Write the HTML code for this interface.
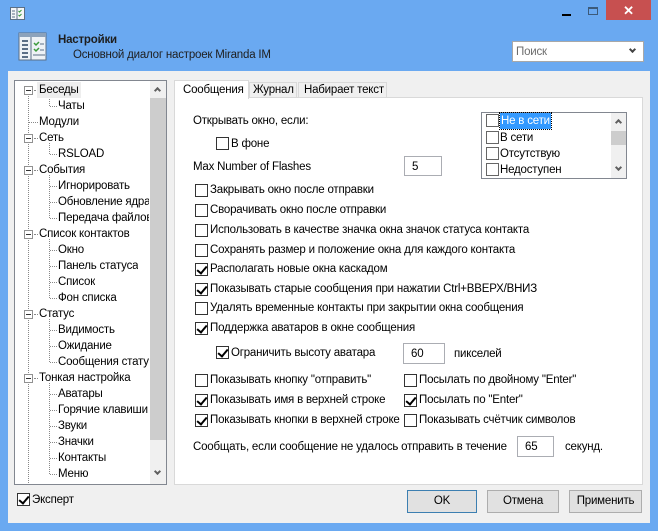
<!DOCTYPE html>
<html><head><meta charset="utf-8"><style>
*{margin:0;padding:0;box-sizing:border-box}
body{width:658px;height:531px;overflow:hidden;background:#6aa9f1;font-family:"Liberation Sans",sans-serif;font-size:11.5px;letter-spacing:-0.2px;color:#000;position:relative;line-height:16px}
.a{position:absolute;white-space:nowrap}
.cb{position:absolute;width:13px;height:13px;border:1px solid #333;background:#fff}
.cb.c::after{content:"";position:absolute;left:3px;top:0px;width:4px;height:8px;border:solid #000;border-width:0 2px 2px 0;transform:rotate(40deg)}
.ed{position:absolute;background:#fff;border:1px solid #abadb3;padding:3px 7px;line-height:14px}
.btn{position:absolute;height:23px;border:1px solid #adadad;background:#e1e1e1;text-align:center;line-height:21px}
.tg{position:absolute;width:9px;height:9px;border:1px solid #919191;background:#fff}
.tg::after{content:"";position:absolute;left:1px;top:3px;width:5px;height:1px;background:#333}
.dv{position:absolute;border-left:1px dotted #888}
.dh{position:absolute;border-top:1px dotted #888;height:0}
.chev{position:absolute;width:5px;height:5px;border:solid #606060;border-width:2px 2px 0 0}
</style></head><body>
<svg class="a" style="left:10px;top:7px" width="16" height="14"><rect x="0.5" y="0.5" width="14" height="12" fill="#f4f6f8" stroke="#5b6f86"/><line x1="7" y1="1" x2="7" y2="12" stroke="#5b6f86"/><path d="M2 4h3M2 7h3M2 10h3" stroke="#5b6f86"/><path d="M8.5 4l1 1 2-2M8.5 8l1 1 2-2" stroke="#3a9a3a" fill="none"/></svg>
<div class="a" style="left:562px;top:14px;width:9px;height:2px;background:#000"></div>
<div class="a" style="left:588px;top:7px;width:10px;height:8px;border:1px solid #3c5a7a;border-top-width:2px"></div>
<div class="a" style="left:606px;top:0;width:45px;height:20px;background:#c75050;color:#fff;text-align:center;font-size:13px;line-height:21px;font-weight:bold">✕</div>
<svg class="a" style="left:18px;top:32px" width="30" height="30"><rect x="1" y="1" width="27" height="27" fill="#eef2f6" stroke="#5b6f86"/><rect x="1" y="1" width="27" height="4" fill="#8ca2bb"/><line x1="13" y1="5" x2="13" y2="28" stroke="#5b6f86"/><path d="M4 9h6M4 13h6M4 17h6M4 21h6M4 25h6" stroke="#5b6f86" stroke-width="2"/><path d="M16 11l2 2 3-3M16 17l2 2 3-3" stroke="#3a9a3a" fill="none" stroke-width="1.5"/><path d="M22 12h4M22 18h4M15 23h12" stroke="#5b6f86"/></svg>
<div class="a" style="left:58px;top:32px;font-weight:bold;color:#1e1e1e">Настройки</div>
<div class="a" style="left:73px;top:47px;color:#1e1e1e">Основной диалог настроек Miranda IM</div>
<div class="a" style="left:512px;top:41px;width:132px;height:21px;background:#fff;border:1px solid #a8a8a8;color:#6d6d6d;padding:2px 3px">Поиск</div>
<div class="chev" style="left:630px;top:47px;transform:rotate(135deg);border-color:#444"></div>
<div class="a" style="left:8px;top:71px;width:642px;height:452px;background:#f0f0f0"></div>
<div class="a" style="left:14px;top:80px;width:153px;height:405px;background:#fff;border:1px solid #828790;overflow:hidden">
 <div class="a" style="left:135px;top:0;width:16px;height:403px;background:#f0f0f0"></div>
 <div class="a" style="left:135px;top:17px;width:16px;height:342px;background:#cdcdcd"></div>
 <div class="chev" style="left:140px;top:7px;transform:rotate(-45deg)"></div>
 <div class="chev" style="left:140px;top:388px;transform:rotate(135deg)"></div>
</div>
<div id="tree"></div>
<div class="cb c" style="left:17px;top:493px"></div>
<div class="a" style="left:32px;top:492px">Эксперт</div>
<div class="a" style="left:174px;top:97px;width:469px;height:388px;background:#fff;border:1px solid #d9d9d9"></div>
<div class="a" style="left:174px;top:80px;width:75px;height:19px;background:#fff;border:1px solid #d9d9d9;border-bottom:none;padding:1px 0 0 8px">Сообщения</div>
<div class="a" style="left:249px;top:82px;width:48px;height:16px;background:#f0f0f0;border:1px solid #d9d9d9;padding:0 0 0 3px;line-height:15px">Журнал</div>
<div class="a" style="left:298px;top:82px;width:89px;height:16px;background:#f0f0f0;border:1px solid #d9d9d9;padding:0 0 0 5px;line-height:15px">Набирает текст</div>
<div class="a" style="left:193px;top:113px">Открывать окно, если:</div>
<div class="cb" style="left:216px;top:137px"></div><div class="a" style="left:231px;top:136px">В фоне</div>
<div class="a" style="left:193px;top:159px">Max Number of Flashes</div>
<div class="ed" style="left:404px;top:156px;width:38px;height:20px">5</div>
<div class="a" style="left:481px;top:112px;width:146px;height:67px;background:#fff;border:1px solid #828790">
 <div class="a" style="left:129px;top:0;width:15px;height:65px;background:#f0f0f0"></div>
 <div class="a" style="left:129px;top:18px;width:15px;height:14px;background:#cdcdcd"></div>
 <div class="chev" style="left:134px;top:7px;transform:rotate(-45deg)"></div>
 <div class="chev" style="left:134px;top:52px;transform:rotate(135deg)"></div>
</div>
<div class="cb" style="left:486px;top:114px;border-color:#666"></div><div class="a" style="left:500px;top:113px;background:#3399ff;color:#fff;padding:0 1px;outline:1px dotted #000">Не в сети</div>
<div class="cb" style="left:486px;top:131px;border-color:#666"></div><div class="a" style="left:500px;top:130px">В сети</div>
<div class="cb" style="left:486px;top:147px;border-color:#666"></div><div class="a" style="left:500px;top:146px">Отсутствую</div>
<div class="cb" style="left:486px;top:163px;border-color:#666"></div><div class="a" style="left:500px;top:162px">Недоступен</div>
<div id="opts"></div>
<div class="cb c" style="left:216px;top:346px"></div><div class="a" style="left:231px;top:345px">Ограничить высоту аватара</div>
<div class="ed" style="left:403px;top:343px;width:42px;height:21px">60</div>
<div class="a" style="left:454px;top:346px">пикселей</div>
<div class="a" style="left:193px;top:439px">Сообщать, если сообщение не удалось отправить в течение</div>
<div class="ed" style="left:517px;top:436px;width:37px;height:21px">65</div>
<div class="a" style="left:565px;top:439px">секунд.</div>
<div class="btn" style="left:407px;top:490px;width:70px;border-color:#3c7fb1">OK</div>
<div class="btn" style="left:487px;top:490px;width:72px">Отмена</div>
<div class="btn" style="left:569px;top:490px;width:73px">Применить</div>
<script>
var t=[[0,"Беседы"],[1,"Чаты"],[0,"Модули"],[0,"Сеть"],[1,"RSLOAD"],[0,"События"],[1,"Игнорировать"],[1,"Обновление ядра"],[1,"Передача файлов"],[0,"Список контактов"],[1,"Окно"],[1,"Панель статуса"],[1,"Список"],[1,"Фон списка"],[0,"Статус"],[1,"Видимость"],[1,"Ожидание"],[1,"Сообщения стату"],[0,"Тонкая настройка"],[1,"Аватары"],[1,"Горячие клавиши"],[1,"Звуки"],[1,"Значки"],[1,"Контакты"],[1,"Меню"]];
var h='<div class="dv" style="left:28px;top:90px;height:393px"></div>';
t.forEach(function(r,i){var y=90+i*16,par=r[0]==0&&t[i+1]&&t[i+1][0]==1;
if(r[0]==0){h+=par?'<div class="tg" style="left:24px;top:'+(y-4)+'px"></div><div class="dh" style="left:34px;top:'+y+'px;width:4px"></div>':'<div class="dh" style="left:29px;top:'+y+'px;width:9px"></div>';
if(par){var j=i+1;while(t[j+1]&&t[j+1][0]==1)j++;h+='<div class="dv" style="left:49px;top:'+(y+5)+'px;height:'+((j-i)*16-5)+'px"></div>';}
h+='<div class="a" style="left:39px;top:'+(y-8)+'px;'+(i==0?'background:#eee;padding:0 2px;margin-left:-2px':'')+'">'+r[1]+'</div>';}
else{h+='<div class="dh" style="left:50px;top:'+y+'px;width:7px"></div><div class="a" style="left:58px;top:'+(y-8)+'px;max-width:91px;overflow:hidden">'+r[1]+'</div>';}});
document.getElementById('tree').innerHTML=h;
var o=[[190,0,"Закрывать окно после отправки"],[210,0,"Сворачивать окно после отправки"],[230,0,"Использовать в качестве значка окна значок статуса контакта"],[250,0,"Сохранять размер и положение окна для каждого контакта"],[269,1,"Располагать новые окна каскадом"],[289,1,"Показывать старые сообщения при нажатии Ctrl+ВВЕРХ/ВНИЗ"],[308,0,"Удалять временные контакты при закрытии окна сообщения"],[328,1,"Поддержка аватаров в окне сообщения"]];
var s='';o.forEach(function(r){s+='<div class="cb'+(r[1]?' c':'')+'" style="left:195px;top:'+(r[0]-6)+'px"></div><div class="a" style="left:210px;top:'+(r[0]-8)+'px">'+r[2]+'</div>';});
var b=[[380,0,'Показывать кнопку "отправить"',0,'Посылать по двойному "Enter"'],[400,1,'Показывать имя в верхней строке',1,'Посылать по "Enter"'],[420,1,'Показывать кнопки в верхней строке',0,'Показывать счётчик символов']];
b.forEach(function(r){s+='<div class="cb'+(r[1]?' c':'')+'" style="left:195px;top:'+(r[0]-6)+'px"></div><div class="a" style="left:210px;top:'+(r[0]-8)+'px;width:193px;overflow:hidden">'+r[2]+'</div><div class="cb'+(r[3]?' c':'')+'" style="left:404px;top:'+(r[0]-6)+'px"></div><div class="a" style="left:419px;top:'+(r[0]-8)+'px">'+r[4]+'</div>';});
document.getElementById('opts').innerHTML=s;
</script>
</body></html>
